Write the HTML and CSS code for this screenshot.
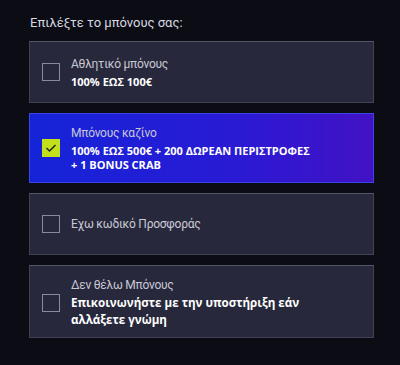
FILE: index.html
```html
<!DOCTYPE html>
<html lang="el">
<head>
    <meta charset="UTF-8">
    <title>Επιλογή μπόνους</title>
    <link rel="stylesheet" href="styles.css">
</head>
<body>
    <div class="bonus-container">
        <h2>Επιλέξτε το μπόνους σας:</h2>
        <div class="bonus-list">
            <label class="bonus-card">
                <span class="check"></span>
                <span class="bonus-text">
                    <span class="bonus-title">Αθλητικό μπόνους</span>
                    <span class="bonus-desc">100% ΕΩΣ 100€</span>
                </span>
            </label>
            <label class="bonus-card selected">
                <span class="check">
                    <svg width="12" height="10" viewBox="0 0 12 10"><path d="M1.5 5 L4.5 8 L10.5 2" fill="none" stroke="#1d2a10" stroke-width="1.5"/></svg>
                </span>
                <span class="bonus-text">
                    <span class="bonus-title">Μπόνους καζίνο</span>
                    <span class="bonus-desc">100% ΕΩΣ 500€ + 200 ΔΩΡΕΑΝ ΠΕΡΙΣΤΡΟΦΕΣ<br>+ 1 BONUS CRAB</span>
                </span>
            </label>
            <label class="bonus-card">
                <span class="check"></span>
                <span class="bonus-text">
                    <span class="bonus-title">Εχω κωδικό Προσφοράς</span>
                </span>
            </label>
            <label class="bonus-card tall">
                <span class="check"></span>
                <span class="bonus-text">
                    <span class="bonus-title">Δεν θέλω Μπόνους</span>
                    <span class="bonus-desc big">Επικοινωνήστε με την υποστήριξη εάν<br>αλλάξετε γνώμη</span>
                </span>
            </label>
        </div>
    </div>
</body>
</html>
```

FILE: styles.css
```css
body {
    margin: 0;
    background-color: #0c0c15;
    font-family: Roboto, 'Noto Sans', sans-serif;
    color: #fff;
}
.bonus-container {
    padding: 14px 26px 0 29px;
}
h2 {
    margin: 0 0 9px 1px;
    font-size: 13px;
    font-weight: 400;
    color: #d8d8e0;
    line-height: 18px;
}
.bonus-list {
    display: flex;
    flex-direction: column;
    gap: 10px;
}
.bonus-card {
    display: flex;
    align-items: center;
    gap: 11px;
    box-sizing: border-box;
    min-height: 62px;
    padding: 8px 12px;
    background: #28283c;
    border: 1px solid #414153;
    border-top-color: #57576c;
}
.bonus-card.selected {
    min-height: 70px;
    background: linear-gradient(90deg, #1524d8 0%, #2a1ad4 60%, #4212c4 100%);
    border-color: #3b45e6;
}
.bonus-card.tall {
    min-height: 73px;
    padding-top: 10px;
}
.check {
    flex: none;
    width: 16px;
    height: 16px;
    border: 1px solid #8a8a98;
    display: flex;
    align-items: center;
    justify-content: center;
}
.selected .check {
    background: #c3e01c;
    border-color: #c3e01c;
}
.bonus-text {
    display: flex;
    flex-direction: column;
    gap: 3px;
}
.bonus-title {
    font-size: 12px;
    letter-spacing: -0.25px;
    color: #c8c8d4;
    line-height: 16px;
}
.bonus-desc {
    font-family: 'Open Sans', sans-serif;
    font-weight: 700;
    font-size: 11px;
    line-height: 14px;
    color: #fff;
}
.bonus-desc.big {
    font-size: 11.6px;
    line-height: 17px;
}
.tall .bonus-text {
    gap: 1px;
}
```
